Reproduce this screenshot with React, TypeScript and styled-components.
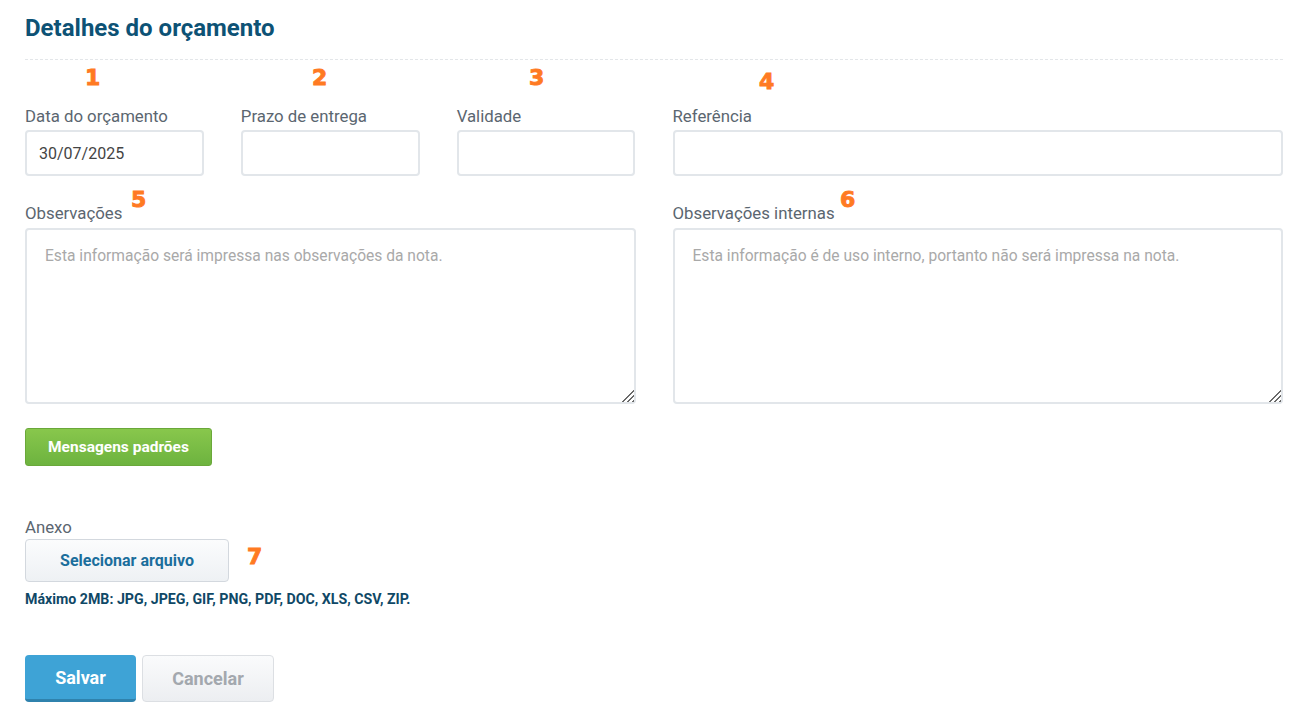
import styled, { createGlobalStyle } from 'styled-components';

const GlobalStyle = createGlobalStyle`
	body {
		margin: 0;
		background: #fff;
		font-family: Roboto, 'Liberation Sans', Arial, sans-serif;
	}
`;

const Page = styled.div`
	position: relative;
	padding: 14px 19px 20px 25px;
`;

const Title = styled.h2`
	margin: 0;
	font-size: 24px;
	line-height: 28px;
	font-weight: 700;
	color: #0d5275;
`;

const Divider = styled.div`
	margin-top: 17px;
	border-top: 1px dashed #e3e6e9;
`;

const Grid = styled.div<{ $top: number }>`
	display: grid;
	grid-template-columns: 1fr 1fr;
	column-gap: 37px;
	margin-top: ${(p) => p.$top}px;
`;

const SubGrid = styled.div`
	display: grid;
	grid-template-columns: repeat(3, 1fr);
	column-gap: 37px;
`;

const Field = styled.div`
	display: flex;
	flex-direction: column;
`;

const Label = styled.label<{ $gap?: number }>`
	font-size: 16.8px;
	line-height: 20px;
	color: #5b6670;
	margin-bottom: ${(p) => p.$gap ?? 4}px;
`;

const Input = styled.input`
	box-sizing: border-box;
	height: 46px;
	width: 100%;
	border: 2px solid #e2e6ea;
	border-radius: 4px;
	padding: 0 12px;
	font-family: inherit;
	font-size: 16px;
	color: #444;
	outline: none;
`;

const TextArea = styled.textarea`
	box-sizing: border-box;
	height: 176px;
	width: 100%;
	border: 2px solid #e2e6ea;
	border-radius: 4px;
	padding: 16px 18px;
	font-family: inherit;
	font-size: 15.6px;
	line-height: 20px;
	color: #444;
	resize: vertical;
	outline: none;

	&::placeholder {
		color: #a9a9a9;
	}

	&::-webkit-resizer {
		background:
			linear-gradient(135deg, #fff 48%, transparent 48%),
			repeating-linear-gradient(135deg, #fff 0 2px, #6a6a6a 2px 3.5px);
	}
`;

const GreenButton = styled.button`
	margin-top: 24px;
	height: 38px;
	width: 187px;
	border: 1px solid #6aa83a;
	border-radius: 3px;
	background: linear-gradient(#88c74c, #6db33f);
	color: #fff;
	font-family: inherit;
	font-size: 15.5px;
	font-weight: 700;
	cursor: pointer;
`;

const Attach = styled.div`
	margin-top: 51px;
	display: flex;
	flex-direction: column;
	align-items: flex-start;
`;

const FileButton = styled.button`
	height: 43px;
	width: 204px;
	border: 1px solid #d3d8de;
	border-radius: 4px;
	background: linear-gradient(#fbfcfd, #eef1f4);
	color: #1b6e9c;
	font-family: inherit;
	font-size: 16px;
	font-weight: 700;
	cursor: pointer;
`;

const Hint = styled.div`
	margin-top: 9px;
	font-size: 14.2px;
	line-height: 16px;
	font-weight: 700;
	color: #0f4866;
`;

const Actions = styled.div`
	margin-top: 48px;
	display: flex;
	gap: 6px;
`;

const Button = styled.button<{ $primary?: boolean }>`
	height: 47px;
	width: ${(p) => (p.$primary ? 111 : 132)}px;
	border-radius: 4px;
	font-family: inherit;
	font-size: 18px;
	font-weight: 700;
	cursor: pointer;
	border: ${(p) => (p.$primary ? 'none' : '1px solid #dcdfe3')};
	border-bottom: ${(p) => (p.$primary ? '3px solid #2f82ad' : '1px solid #dcdfe3')};
	background: ${(p) => (p.$primary ? '#3ea3d6' : 'linear-gradient(#fafbfc, #eceef1)')};
	color: ${(p) => (p.$primary ? '#fff' : '#a3a8ae')};
`;

const Marker = styled.span<{ $x: number; $y: number }>`
	position: absolute;
	left: ${(p) => p.$x}px;
	top: ${(p) => p.$y}px;
	font-family: 'DejaVu Sans', sans-serif;
	font-weight: 900;
	font-size: 22px;
	line-height: 22px;
	color: #ff7a22;
	-webkit-text-stroke: 0.9px #ff7a22;
`;

const markers = [
	{ n: '1', x: 85, y: 67 },
	{ n: '2', x: 312, y: 67 },
	{ n: '3', x: 529, y: 67 },
	{ n: '4', x: 759, y: 71 },
	{ n: '5', x: 131, y: 189 },
	{ n: '6', x: 840, y: 189 },
	{ n: '7', x: 247, y: 546 },
];

const App = () => {
	return (
		<>
			<GlobalStyle />
			<Page>
				<Title>Detalhes do orçamento</Title>
				<Divider />
				<Grid $top={46}>
					<SubGrid>
						<Field>
							<Label>Data do orçamento</Label>
							<Input defaultValue="30/07/2025" />
						</Field>
						<Field>
							<Label>Prazo de entrega</Label>
							<Input />
						</Field>
						<Field>
							<Label>Validade</Label>
							<Input />
						</Field>
					</SubGrid>
					<Field>
						<Label>Referência</Label>
						<Input />
					</Field>
				</Grid>
				<Grid $top={27}>
					<Field>
						<Label $gap={5}>Observações</Label>
						<TextArea placeholder="Esta informação será impressa nas observações da nota." />
					</Field>
					<Field>
						<Label $gap={5}>Observações internas</Label>
						<TextArea placeholder="Esta informação é de uso interno, portanto não será impressa na nota." />
					</Field>
				</Grid>
				<GreenButton>Mensagens padrões</GreenButton>
				<Attach>
					<Label $gap={2}>Anexo</Label>
					<FileButton>Selecionar arquivo</FileButton>
					<Hint>Máximo 2MB: JPG, JPEG, GIF, PNG, PDF, DOC, XLS, CSV, ZIP.</Hint>
				</Attach>
				<Actions>
					<Button $primary>Salvar</Button>
					<Button>Cancelar</Button>
				</Actions>
				{markers.map((m) => (
					<Marker key={m.n} $x={m.x} $y={m.y}>
						{m.n}
					</Marker>
				))}
			</Page>
		</>
	);
};

export default App;
